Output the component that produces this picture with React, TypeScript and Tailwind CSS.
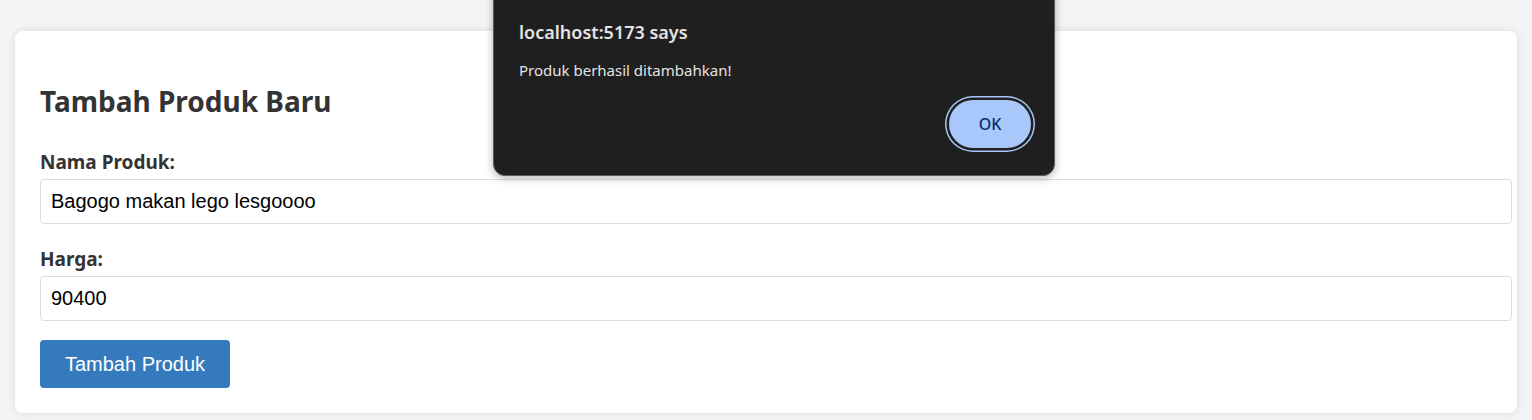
import React from "react";

export default function App() {
  return (
    <div className="relative min-h-[420px] w-full overflow-hidden bg-[#f4f4f4] pt-[31px] px-[15px]">
      <div className="rounded-[8px] bg-white px-[25px] pt-[50px] pb-[25px] shadow-[0_0_10px_rgba(0,0,0,0.1)]">
        <h2 className="m-0 font-['Noto_Sans',sans-serif] text-[28px] font-bold leading-[40px] text-[#333]">
          Tambah Produk Baru
        </h2>
        <form className="mt-[29px] flex flex-col" onSubmit={(e) => e.preventDefault()}>
          <label className="font-['Noto_Sans',sans-serif] text-[19px] font-bold leading-[24px] text-[#333]">
            Nama Produk:
          </label>
          <input
            readOnly
            value="Bagogo makan lego lesgoooo"
            className="mt-[5px] h-[45px] w-[calc(100%+20px)] rounded-[4px] border border-[#ddd] px-[10px] font-['Liberation_Sans',Arial,sans-serif] text-[20px] text-black outline-none"
          />
          <label className="mt-[23px] font-['Noto_Sans',sans-serif] text-[19px] font-bold leading-[24px] text-[#333]">
            Harga:
          </label>
          <input
            readOnly
            value="90400"
            className="mt-[5px] h-[45px] w-[calc(100%+20px)] rounded-[4px] border border-[#ddd] px-[10px] font-['Liberation_Sans',Arial,sans-serif] text-[20px] text-black outline-none"
          />
          <div className="mt-[19px]">
            <button
              type="submit"
              className="h-[48px] w-[190px] rounded-[4px] bg-[#357abd] font-['Liberation_Sans',Arial,sans-serif] text-[20px] text-white"
            >
              Tambah Produk
            </button>
          </div>
        </form>
      </div>

      <div className="absolute left-[493px] top-[-20px] flex h-[196px] w-[562px] flex-col rounded-b-[12px] border border-[#5a5a5a] bg-[#1f1f1f] pl-[25px] pr-[23px] pt-[39px] shadow-[0_2px_8px_rgba(0,0,0,0.3)] font-['Noto_Sans',sans-serif]">
        <div className="text-[18px] font-semibold leading-[24px] text-[#e3e3e3]">localhost:5173 says</div>
        <div className="mt-[16px] text-[15px] leading-[20px] text-[#e3e3e3]">Produk berhasil ditambahkan!</div>
        <div className="mt-[20px] flex justify-end">
          <button className="h-[48px] w-[82px] rounded-full bg-[#a8c7fa] text-[16px] font-medium text-[#062e6f] shadow-[0_0_0_2.5px_#1f1f1f,0_0_0_4px_#a8c7fa]">
            OK
          </button>
        </div>
      </div>
    </div>
  );
}
